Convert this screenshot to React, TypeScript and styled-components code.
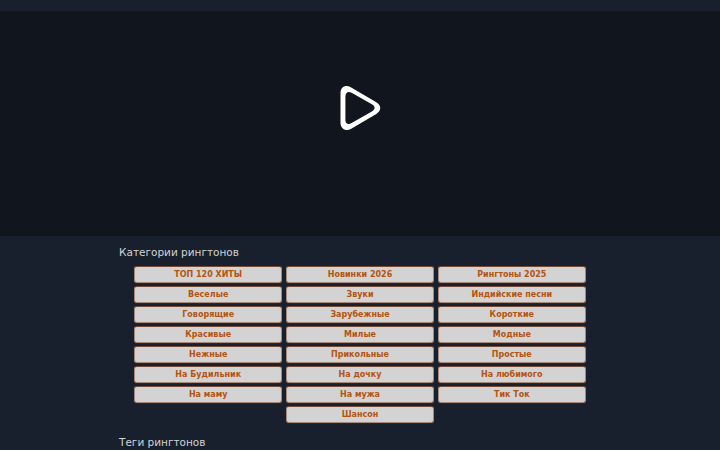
import { FC } from 'react';
import styled, { createGlobalStyle } from 'styled-components';

const categories = [
  'ТОП 120 ХИТЫ',
  'Новинки 2026',
  'Рингтоны 2025',
  'Веселые',
  'Звуки',
  'Индийские песни',
  'Говорящие',
  'Зарубежные',
  'Короткие',
  'Красивые',
  'Милые',
  'Модные',
  'Нежные',
  'Прикольные',
  'Простые',
  'На Будильник',
  'На дочку',
  'На любимого',
  'На маму',
  'На мужа',
  'Тик Ток',
  'Шансон',
];

const App: FC = () => {
  return (
    <>
      <GlobalStyle />
      <StyledPage>
        <StyledPlayerArea>
          <StyledPlayIcon viewBox="0 0 44 48" aria-label="Play">
            <path
              fillRule="evenodd"
              d="M2.500 10C2.500 3.700 7.800 1.300 12.800 4.200L38.300 19.300C43.600 22.500 43.600 27.700 38.300 30.900L12.800 46C7.800 48.900 2.500 45.500 2.500 40ZM7.400 13.500V37C7.400 40.700 10.200 42 13.600 40.100L34.300 28.200C37.300 26.400 37.300 23.400 34.300 21.600L13.600 9.700C10.200 7.800 7.400 9.500 7.400 13.500Z"
            />
          </StyledPlayIcon>
        </StyledPlayerArea>
        <StyledContent>
          <StyledTitle>Категории рингтонов</StyledTitle>
          <StyledCategoryList>
            {categories.map((name) => (
              <StyledCategory key={name} href="#">
                {name}
              </StyledCategory>
            ))}
          </StyledCategoryList>
          <StyledTitle>Теги рингтонов</StyledTitle>
        </StyledContent>
      </StyledPage>
    </>
  );
};

const GlobalStyle = createGlobalStyle`
  * {
    box-sizing: border-box;
  }
  body {
    margin: 0;
    overflow: hidden;
    background: #18202d;
    font-family: 'DejaVu Sans', sans-serif;
  }
`;

const StyledPage = styled.div`
  height: 450px;
  padding-top: 11px;
  overflow: hidden;
  background: #18202d;
`;

const StyledPlayerArea = styled.div`
  display: flex;
  justify-content: center;
  height: 225px;
  padding-top: 72px;
  background: #11161e;
`;

const StyledPlayIcon = styled.svg`
  width: 44px;
  height: 48px;
  overflow: visible;
  fill: #fff;
`;

const StyledContent = styled.main`
  width: 482px;
  margin: 0 auto;
  padding-top: 8px;
`;

const StyledTitle = styled.h2`
  margin: 0;
  font-size: 10.5px;
  font-weight: 400;
  line-height: 16px;
  color: #d3d3d3;
`;

const StyledCategoryList = styled.div`
  display: flex;
  flex-wrap: wrap;
  justify-content: center;
  gap: 3px 3.8px;
  padding: 6px 15px 11px;
`;

const StyledCategory = styled.a`
  width: 148px;
  height: 17px;
  border: 1px solid #a58878;
  border-top-color: #764b36;
  border-radius: 3px;
  background: #d3d3d3;
  box-shadow: 0 1px 0 #33231f;
  font-size: 8px;
  font-weight: 700;
  line-height: 16px;
  text-align: center;
  text-decoration: none;
  color: #b35410;
`;

export default App;
